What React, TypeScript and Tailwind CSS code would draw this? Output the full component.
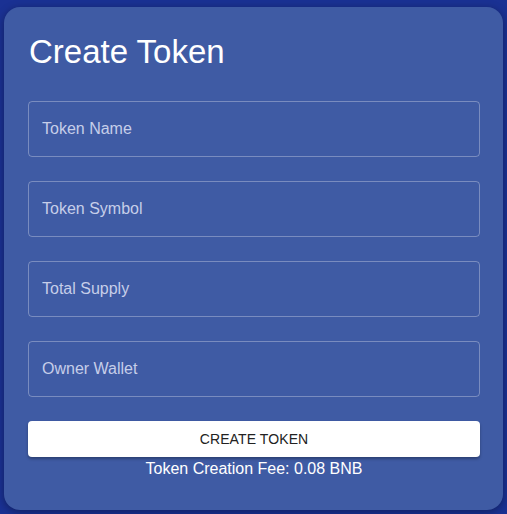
import React from "react";

export default function App() {
  const fields = ["Token Name", "Token Symbol", "Total Supply", "Owner Wallet"];
  return (
    <div
      className="w-[507px] h-[514px] bg-[#1a3193] overflow-hidden"
      style={{ fontFamily: '"Liberation Sans", Arial, sans-serif' }}
    >
      <div className="ml-[4px] mt-[7px] w-[499px] h-[503px] rounded-[16px] bg-[#3f5ba4] pl-6 pr-[23px] pt-6 shadow-[0_2px_8px_rgba(0,0,0,0.35)] flex flex-col">
        <h1 className="mt-[2px] ml-px text-[33px] leading-[37px] text-white font-normal">Create Token</h1>
        <div className="mt-[31px] flex flex-col gap-6">
          {fields.map((f) => (
            <input
              key={f}
              placeholder={f}
              className="h-[56px] w-full rounded-[4px] border border-white/30 bg-transparent px-[13px] text-[16px] text-white placeholder:text-[#c6cee9] outline-none"
            />
          ))}
        </div>
        <button className="mt-6 h-[36px] w-full rounded-[4px] bg-white text-[14px] text-[#222] tracking-[0.1px] shadow-[0_2px_3px_rgba(0,0,0,0.3)]">
          CREATE TOKEN
        </button>
        <p className="text-center text-[16px] leading-[24px] text-white">Token Creation Fee: 0.08 BNB</p>
      </div>
    </div>
  );
}
